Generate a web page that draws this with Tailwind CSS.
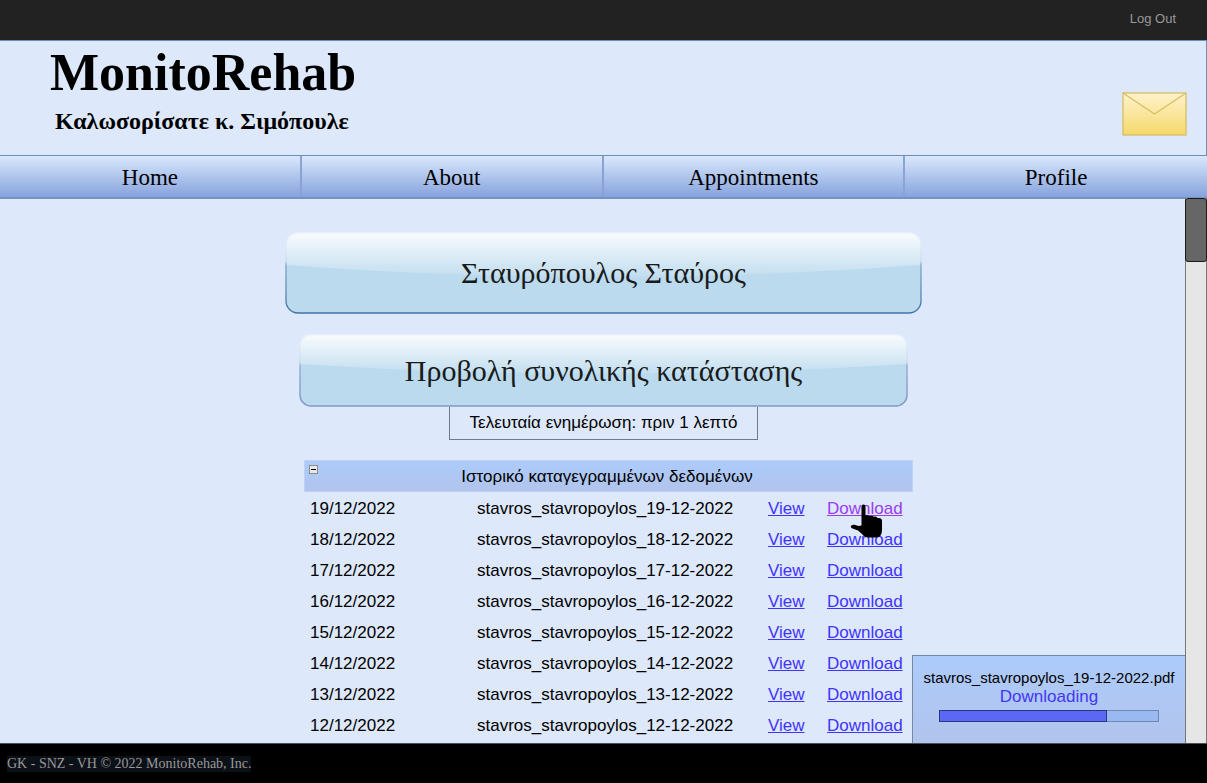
<!DOCTYPE html>
<html lang="el">
<head>
<meta charset="utf-8">
<meta name="viewport" content="width=device-width, initial-scale=1">
<title>MonitoRehab</title>
<script src="https://cdn.jsdelivr.net/npm/@tailwindcss/browser@4"></script>
</head>
<body class="flex flex-col h-screen overflow-hidden bg-[#dde8fa] text-black font-['Liberation_Sans',Arial,sans-serif]">
  <div class="h-10 shrink-0 bg-[#222] flex items-center justify-end pr-[31px] pb-0.5">
    <a href="#" class="text-[13px] leading-4 text-[#999]">Log Out</a>
  </div>

  <header class="h-[115px] shrink-0 border-t border-r border-[#6c8ebf] flex justify-between pl-[50px] pr-[19px] font-['Liberation_Serif',serif] font-bold">
    <div class="pt-0.5">
      <h1 class="text-[52px] leading-[60px]">MonitoRehab</h1>
      <p class="text-[24px] leading-7 pl-[5px] pt-1">Καλωσορίσατε κ. Σιμόπουλε</p>
    </div>
    <button type="button" aria-label="Messages" class="self-start mt-[51px]">
      <svg class="block" width="65" height="44" viewBox="0 0 65 44" fill="none" stroke="#d6bf66">
        <defs><linearGradient id="mail" x1="0" y1="0" x2="0" y2="1"><stop offset="0" stop-color="#fff2cc"/><stop offset="1" stop-color="#f5d96b"/></linearGradient></defs>
        <rect x="1" y="1" width="63" height="42" fill="url(#mail)" stroke-width="1.3"/>
        <path d="M1 1 32.5 22 64 1" stroke-width="1.3"/>
      </svg>
    </button>
  </header>

  <nav class="shrink-0 h-11 grid grid-cols-4 border-t border-t-[#6c8ebf] border-b-2 border-b-[#7792c4] bg-linear-to-b from-[#dae8fc] to-[#87a3dd] divide-x-2 divide-[#8ba3d3] font-['Liberation_Serif',serif] text-[23px] leading-7">
    <a href="#" class="flex items-center justify-center pt-0.5">Home</a>
    <a href="#" class="flex items-center justify-center pt-0.5">About</a>
    <a href="#" class="flex items-center justify-center pt-0.5">Appointments</a>
    <a href="#" class="flex items-center justify-center pt-0.5">Profile</a>
  </nav>

  <main class="relative grow min-h-0">
    <div class="h-full overflow-hidden flex justify-center">
      <div class="w-[637px] pt-[33px] flex flex-col items-center">
        <button type="button" class="relative w-full h-[82px] shrink-0 font-['Liberation_Serif',serif] text-[30px] leading-9 text-[#1a1a1a]">
          <svg class="absolute inset-0 w-full h-full" viewBox="0 0 636 82" preserveAspectRatio="none" fill="none">
            <defs>
              <linearGradient id="gloss" x1="0" y1="0" x2="0" y2="1"><stop offset="0" stop-color="#fff" stop-opacity=".9"/><stop offset="1" stop-color="#fff" stop-opacity=".1"/></linearGradient>
              <linearGradient id="edge1" x1="0" y1="0" x2="0" y2="1"><stop offset="0" stop-color="#edf3fb"/><stop offset=".35" stop-color="#c8dcec"/><stop offset=".4" stop-color="#7fa8c8"/><stop offset="1" stop-color="#3f74a3"/></linearGradient>
            </defs>
            <rect x="1" y="1" width="634" height="80" rx="12" fill="#bbdaee"/>
            <path d="M1 33V13A12 12 0 0 1 13 1H623A12 12 0 0 1 635 13V33Q318 57 1 33Z" fill="url(#gloss)"/>
            <rect x="1" y="1" width="634" height="80" rx="12" stroke="url(#edge1)" stroke-width="1.3"/>
          </svg>
          <span class="relative">Σταυρόπουλος Σταύρος</span>
        </button>
        <button type="button" class="relative w-[609px] h-[73px] mt-5 shrink-0 font-['Liberation_Serif',serif] text-[30px] leading-9 text-[#1a1a1a]">
          <svg class="absolute inset-0 w-full h-full" viewBox="0 0 610 73" preserveAspectRatio="none" fill="none">
            <defs>
              <linearGradient id="edge2" x1="0" y1="0" x2="0" y2="1"><stop offset="0" stop-color="#edf3fb"/><stop offset=".38" stop-color="#cbdcec"/><stop offset=".43" stop-color="#98b0d4"/><stop offset="1" stop-color="#7f98c8"/></linearGradient>
            </defs>
            <rect x="1" y="1" width="608" height="71" rx="11" fill="#bbdaee"/>
            <path d="M1 30V12A11 11 0 0 1 12 1H598A11 11 0 0 1 609 12V30Q305 50 1 30Z" fill="url(#gloss)"/>
            <rect x="1" y="1" width="608" height="71" rx="11" stroke="url(#edge2)" stroke-width="1.5"/>
          </svg>
          <span class="relative">Προβολή συνολικής κατάστασης</span>
        </button>
        <p class="shrink-0 w-[309px] h-[33px] border border-t-0 border-[#6f7a8c] text-center text-[17px] leading-8">Τελευταία ενημέρωση: πριν 1 λεπτό</p>

        <section class="self-end w-[609px] mr-[9px] mt-5 shrink-0">
          <div class="flex h-8 mb-px border border-[#bcd2f8] bg-linear-to-b from-[#accbfb] to-[#b1c4ec] pl-1 pr-4">
            <button type="button" aria-label="Collapse" class="mt-1 shrink-0 self-start">
              <svg class="block" width="9" height="9" viewBox="0 0 9 9"><rect x=".5" y=".5" width="8" height="8" fill="#e8e8e8" stroke="#8d8d8d"/><path d="M2 4.500h5" stroke="#000"/></svg>
            </button>
            <h2 class="grow text-center text-[17px] leading-8">Ιστορικό καταγεγραμμένων δεδομένων</h2>
          </div>
          <table class="w-full table-fixed text-[17px] leading-[31px] [&_a]:underline [&_a]:text-[#3f33ff]">
            <colgroup><col class="w-[173px]"><col><col class="w-[59px]"><col class="w-[86px]"></colgroup>
            <tbody>
              <tr class="h-[31px]"><td class="pl-1.5">19/12/2022</td><td>stavros_stavropoylos_19-12-2022</td><td><a href="#">View</a></td><td><a href="#" class="text-[#9a3cf0]!">Download</a></td></tr>
              <tr class="h-[31px]"><td class="pl-1.5">18/12/2022</td><td>stavros_stavropoylos_18-12-2022</td><td><a href="#">View</a></td><td><a href="#">Download</a></td></tr>
              <tr class="h-[31px]"><td class="pl-1.5">17/12/2022</td><td>stavros_stavropoylos_17-12-2022</td><td><a href="#">View</a></td><td><a href="#">Download</a></td></tr>
              <tr class="h-[31px]"><td class="pl-1.5">16/12/2022</td><td>stavros_stavropoylos_16-12-2022</td><td><a href="#">View</a></td><td><a href="#">Download</a></td></tr>
              <tr class="h-[31px]"><td class="pl-1.5">15/12/2022</td><td>stavros_stavropoylos_15-12-2022</td><td><a href="#">View</a></td><td><a href="#">Download</a></td></tr>
              <tr class="h-[31px]"><td class="pl-1.5">14/12/2022</td><td>stavros_stavropoylos_14-12-2022</td><td><a href="#">View</a></td><td><a href="#">Download</a></td></tr>
              <tr class="h-[31px]"><td class="pl-1.5">13/12/2022</td><td>stavros_stavropoylos_13-12-2022</td><td><a href="#">View</a></td><td><a href="#">Download</a></td></tr>
              <tr class="h-[31px]"><td class="pl-1.5">12/12/2022</td><td>stavros_stavropoylos_12-12-2022</td><td><a href="#">View</a></td><td><a href="#">Download</a></td></tr>
            </tbody>
          </table>
        </section>
      </div>
    </div>

    <!-- hand pointer -->
    <svg class="absolute left-[850px] top-[305px]" width="33" height="34" viewBox="0 0 33 34"><path d="M11.500 2.500Q11.500.5 13.400.5Q15.500.5 15.500 2.500V11.500Q17.500 10.300 19.500 12Q22 11 24 12.800Q26.500 11.800 27.500 14Q32 13.500 32 17V26Q32 33.500 26 33.500H18.500Q14.500 33.500 12 30L8 26.500L2.500 24.500Q.3 23.500 1 22Q2 20.500 4.500 20.800L8.500 22L11.500 21.500Z"/></svg>

    <aside class="absolute right-[21px] bottom-0 w-[274px] h-[88px] border border-b-0 border-[#75889f] bg-linear-to-b from-[#accbfb] to-[#b1c4ec] pt-3 px-2.5 text-center">
      <p class="text-[15px] leading-5 whitespace-nowrap">stavros_stavropoylos_19-12-2022.pdf</p>
      <p class="text-[17px] leading-[18px] text-[#4437f5]">Downloading</p>
      <div role="progressbar" aria-label="Downloading" aria-valuenow="77" aria-valuemin="0" aria-valuemax="100" class="mx-4 mt-1 h-3 border border-[#6e87b4] bg-[#99b9f0]">
        <div class="-m-px h-3 border border-[#2c3480] bg-[#5b68f3]" style="width:77%"></div>
      </div>
    </aside>

    <div class="absolute right-0 -top-px bottom-0 w-[22px] border-x border-[#777] bg-[#e6e6e6]">
      <div class="-mx-px h-16 rounded-[3px] border border-[#1a1a1a] bg-[#666]"></div>
    </div>
  </main>

  <footer class="h-10 shrink-0 border-t border-[#4a5058] bg-black pl-[7px] flex items-center">
    <span class="bg-[#0c1017] font-['Liberation_Serif',serif] text-[14px] leading-4 text-[#999]">GK - SNZ - VH © 2022 MonitoRehab, Inc.</span>
  </footer>
</body>
</html>
